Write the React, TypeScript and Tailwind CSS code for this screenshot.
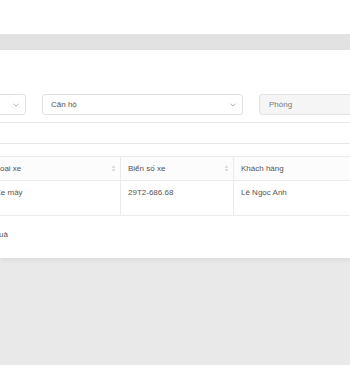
import React from "react";

function Chevron() {
  return (
    <svg width="6" height="4" viewBox="0 0 6 4" fill="none" className="shrink-0">
      <path d="M0.5 0.7 L3 3.2 L5.5 0.7" stroke="#a8a8a8" strokeWidth="0.9" />
    </svg>
  );
}

function Sorter() {
  return (
    <svg width="5" height="7" viewBox="0 0 5 7" className="shrink-0">
      <path d="M2.5 0.4 L4.5 2.8 L0.5 2.8 Z" fill="#d4d4d4" />
      <path d="M2.5 6.6 L4.5 4.2 L0.5 4.2 Z" fill="#d4d4d4" />
    </svg>
  );
}

export default function App() {
  return (
    <div
      className="min-h-[365px] w-[350px] overflow-hidden bg-[#e9e9e9] text-[8px] leading-[10px] text-[#555]"
      style={{ fontFamily: '"Liberation Sans", Arial, sans-serif' }}
    >
      <div className="h-[34px] bg-white" />
      <div className="h-[16px] bg-[#e2e2e2]" />
      <div className="bg-white pt-[44px] pb-[18px] shadow-[0_2px_5px_rgba(0,0,0,0.07)]">
        {/* Filters */}
        <div className="flex gap-[16px] whitespace-nowrap">
          <div className="-ml-[94px] flex h-[21px] w-[120px] shrink-0 items-center justify-end rounded-[3px] border border-[#e2e2e2] bg-white pr-[6px]">
            <Chevron />
          </div>
          <div className="flex h-[21px] w-[201px] shrink-0 items-center justify-between rounded-[3px] border border-[#e2e2e2] bg-white pl-[8px] pr-[6px]">
            <span className="text-[#555]">Căn hộ</span>
            <Chevron />
          </div>
          <div className="flex h-[21px] w-[120px] shrink-0 items-center rounded-[3px] border border-[#e2e2e2] bg-[#f5f5f5] pl-[9px]">
            <span className="text-[#7a7a7a]">Phòng</span>
          </div>
        </div>

        {/* Search input */}
        <div className="-ml-[20px] mt-[7px] h-[22px] w-[400px] border border-[#e6e6e6] bg-white" />

        {/* Table */}
        <div className="-ml-[12px] mt-[12px] w-[420px] border-t border-[#ebebeb]">
          <div className="flex h-[24px] border-b border-[#ebebeb] bg-[#fcfcfc]">
            <div className="flex w-[133px] shrink-0 items-center justify-between border-r border-[#ebebeb] pl-[7.5px] pr-[4px]">
              <span>Loại xe</span>
              <Sorter />
            </div>
            <div className="flex w-[113px] shrink-0 items-center justify-between border-r border-[#ebebeb] pl-[7px] pr-[4px]">
              <span>Biển số xe</span>
              <Sorter />
            </div>
            <div className="flex flex-1 items-center pl-[7px]">
              <span>Khách hàng</span>
            </div>
          </div>
          <div className="flex h-[35px] border-b border-[#ebebeb]">
            <div className="w-[133px] shrink-0 border-r border-[#ebebeb] pl-[7.5px] pt-[7px]">
              Xe máy
            </div>
            <div className="w-[113px] shrink-0 border-r border-[#ebebeb] pl-[7px] pt-[7px]">
              29T2-686.68
            </div>
            <div className="flex-1 pl-[7px] pt-[7px]">Lê Ngọc Anh</div>
          </div>
        </div>

        {/* Footer */}
        <div className="mt-[14px] flex w-[8px] justify-end whitespace-nowrap">
          <span>Tổng 1 kết quả</span>
        </div>
      </div>
    </div>
  );
}
